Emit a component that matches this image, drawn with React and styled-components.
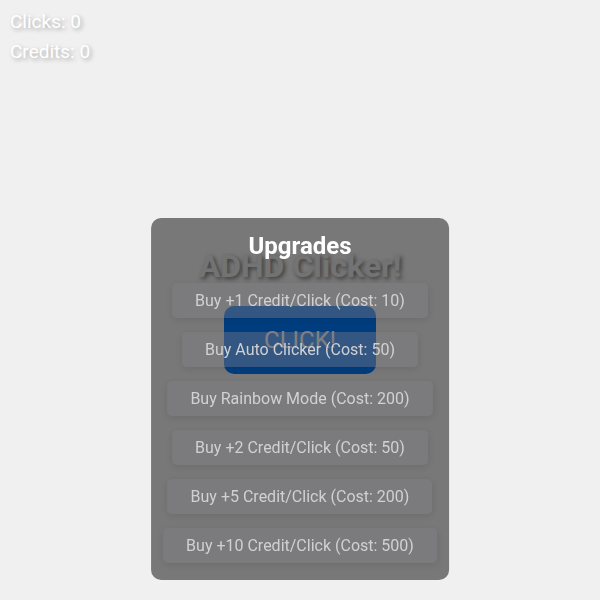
import * as React from 'react'
import styled, { createGlobalStyle } from 'styled-components'

const GlobalStyle = createGlobalStyle`
  html, body {
    margin: 0;
    padding: 0;
    background: #f0f0f0;
    font-family: Roboto, "Liberation Sans", Arial, sans-serif;
  }
`

const Page = styled.div`
  min-height: 100vh;
  display: flex;
  flex-direction: column;
`

const Stats = styled.div`
  padding: 7px 10px 0;
  color: #fff;
  font-size: 19px;
  line-height: 30px;
  text-shadow: 2px 2px 4px rgba(0, 0, 0, 0.3);
`

const Game = styled.div`
  display: flex;
  flex-direction: column;
  align-items: center;
  padding-top: 181px;
`

const Title = styled.h1`
  margin: 0 0 21px;
  font-size: 32px;
  line-height: 37px;
  font-weight: 700;
  color: #e6e6e6;
  text-shadow: 2px 2px 4px rgba(0, 0, 0, 0.5);
`

const ClickButton = styled.button`
  width: 152px;
  height: 68px;
  border: none;
  border-radius: 10px;
  background: #007bff;
  color: #fff;
  font-family: inherit;
  font-size: 24px;
  cursor: pointer;
`

const Upgrades = styled.div`
  position: fixed;
  bottom: 20px;
  left: 50%;
  transform: translateX(-50%);
  background: rgba(0, 0, 0, 0.5);
  border-radius: 10px;
  padding: 14px 12px 17px;
  display: flex;
  flex-direction: column;
  align-items: center;
  gap: 14px;
`

const Heading = styled.h2`
  margin: 0 0 9px;
  font-size: 24px;
  line-height: 28px;
  font-weight: 700;
  color: #fff;
`

const UpgradeButton = styled.button`
  border: none;
  border-radius: 5px;
  padding: 8px 23px;
  background: rgba(128, 128, 134, 0.4);
  color: #d0d1d3;
  font-family: inherit;
  font-size: 16px;
  line-height: 19px;
  white-space: nowrap;
  box-shadow: 0 2px 8px rgba(0, 0, 0, 0.1);
  cursor: pointer;
`

const UPGRADES = [
  'Buy +1 Credit/Click (Cost: 10)',
  'Buy Auto Clicker (Cost: 50)',
  'Buy Rainbow Mode (Cost: 200)',
  'Buy +2 Credit/Click (Cost: 50)',
  'Buy +5 Credit/Click (Cost: 200)',
  'Buy +10 Credit/Click (Cost: 500)',
]

const App = () => {
  const [clicks, setClicks] = React.useState(0)
  const [credits, setCredits] = React.useState(0)

  return <Page>
    <GlobalStyle />
    <Stats>
      <div>Clicks: {clicks}</div>
      <div>Credits: {credits}</div>
    </Stats>
    <Game>
      <Title>ADHD Clicker!</Title>
      <ClickButton onClick={() => { setClicks(c => c + 1); setCredits(c => c + 1) }}>CLICK!</ClickButton>
    </Game>
    <Upgrades>
      <Heading>Upgrades</Heading>
      {UPGRADES.map(u => <UpgradeButton key={u}>{u}</UpgradeButton>)}
    </Upgrades>
  </Page>
}

export default App
